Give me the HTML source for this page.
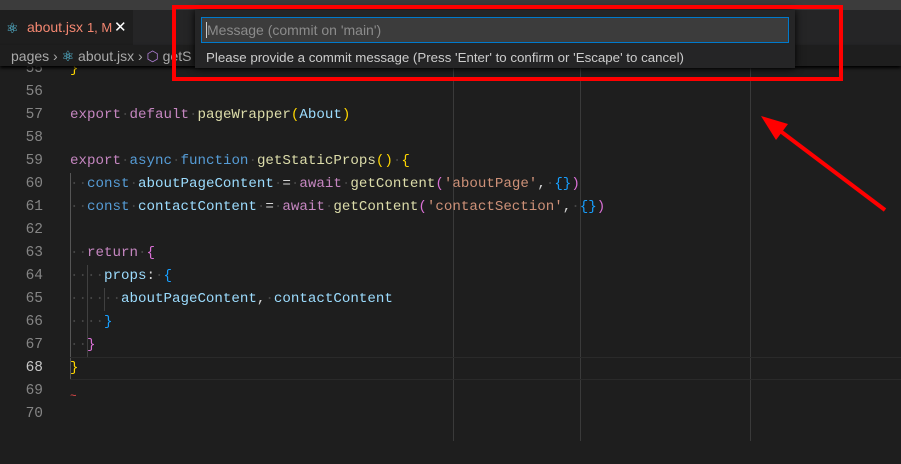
<!DOCTYPE html>
<html><head><style>
body{margin:0;width:901px;height:441px;overflow:hidden;background:#1e1e1e;position:relative;font-family:"Liberation Sans",sans-serif}
.abs{position:absolute}
.code{font-family:"Liberation Mono",monospace;font-size:14.17px;white-space:pre;}
.ln{position:absolute;left:0;width:43px;text-align:right;color:#858585;font-family:"Liberation Mono",monospace;font-size:14.5px;}
.row{position:absolute;left:70px;height:23px;line-height:23px}
.k{color:#c586c0}.b{color:#569cd6}.v{color:#9cdcfe}.f{color:#dcdcaa}.s{color:#ce9178}.y{color:#ffd700}.p{color:#da70d6}.l{color:#179fff}.d{color:#444}.w{color:#d4d4d4}
.top{z-index:5}
</style></head><body>
<!-- rulers -->
<div class="abs" style="left:453px;top:67px;width:1px;height:374px;background:#3a3a3a"></div>
<div class="abs" style="left:580px;top:67px;width:1px;height:374px;background:#3a3a3a"></div>
<div class="abs" style="left:750px;top:67px;width:1px;height:374px;background:#3a3a3a"></div>
<!-- indent guides -->
<div class="abs" style="left:70px;top:173px;width:1px;height:207px;background:#555"></div>
<div class="abs" style="left:87px;top:265px;width:1px;height:92px;background:#404040"></div>
<div class="abs" style="left:104px;top:288px;width:1px;height:23px;background:#404040"></div>
<!-- current line -->
<div class="abs" style="left:70px;top:357px;width:831px;height:23px;border-top:1px solid #2a2a2a;border-bottom:1px solid #2a2a2a;box-sizing:border-box"></div>
<div class="code">
<div class="ln" style="top:58px;line-height:23px">55</div>
<div class="ln" style="top:81px;line-height:23px">56</div>
<div class="ln" style="top:104px;line-height:23px">57</div>
<div class="ln" style="top:127px;line-height:23px">58</div>
<div class="ln" style="top:150px;line-height:23px">59</div>
<div class="ln" style="top:173px;line-height:23px">60</div>
<div class="ln" style="top:196px;line-height:23px">61</div>
<div class="ln" style="top:219px;line-height:23px">62</div>
<div class="ln" style="top:242px;line-height:23px">63</div>
<div class="ln" style="top:265px;line-height:23px">64</div>
<div class="ln" style="top:288px;line-height:23px">65</div>
<div class="ln" style="top:311px;line-height:23px">66</div>
<div class="ln" style="top:334px;line-height:23px">67</div>
<div class="ln" style="top:357px;line-height:23px;color:#c6c6c6">68</div>
<div class="ln" style="top:380px;line-height:23px">69</div>
<div class="ln" style="top:403px;line-height:23px">70</div>
<div class="row" style="top:58px"><span class="y">}</span></div>
<div class="row" style="top:104px"><span class="k">export</span><span class="d">·</span><span class="k">default</span><span class="d">·</span><span class="f">pageWrapper</span><span class="y">(</span><span class="v">About</span><span class="y">)</span></div>
<div class="row" style="top:150px"><span class="k">export</span><span class="d">·</span><span class="b">async</span><span class="d">·</span><span class="b">function</span><span class="d">·</span><span class="f">getStaticProps</span><span class="y">()</span><span class="d">·</span><span class="y">{</span></div>
<div class="row" style="top:173px"><span class="d">··</span><span class="b">const</span><span class="d">·</span><span class="v">aboutPageContent</span><span class="d">·</span><span class="w">=</span><span class="d">·</span><span class="k">await</span><span class="d">·</span><span class="f">getContent</span><span class="p">(</span><span class="s">'aboutPage'</span><span class="w">,</span><span class="d">·</span><span class="l">{}</span><span class="p">)</span></div>
<div class="row" style="top:196px"><span class="d">··</span><span class="b">const</span><span class="d">·</span><span class="v">contactContent</span><span class="d">·</span><span class="w">=</span><span class="d">·</span><span class="k">await</span><span class="d">·</span><span class="f">getContent</span><span class="p">(</span><span class="s">'contactSection'</span><span class="w">,</span><span class="d">·</span><span class="l">{}</span><span class="p">)</span></div>
<div class="row" style="top:242px"><span class="d">··</span><span class="k">return</span><span class="d">·</span><span class="p">{</span></div>
<div class="row" style="top:265px"><span class="d">····</span><span class="v">props</span><span class="w">:</span><span class="d">·</span><span class="l">{</span></div>
<div class="row" style="top:288px"><span class="d">······</span><span class="v">aboutPageContent</span><span class="w">,</span><span class="d">·</span><span class="v">contactContent</span></div>
<div class="row" style="top:311px"><span class="d">····</span><span class="l">}</span></div>
<div class="row" style="top:334px"><span class="d">··</span><span class="p">}</span></div>
<div class="row" style="top:357px"><span class="y">}</span></div>
<div class="row" style="top:386px;color:#f14c4c;font-size:11px">~</div>
</div>
<div class="abs top" style="left:0;top:0;width:901px;height:10px;background:#3c3c3c"></div>
<div class="abs top" style="left:0;top:10px;width:901px;height:35px;background:#252526"></div>
<div class="abs top" style="left:0;top:10px;width:133px;height:35px;background:#1e1e1e"></div>
<div class="abs top" style="left:6px;top:20px;color:#61dafb;font-size:14px">⚛</div>
<div class="abs top" style="left:27px;top:19px;color:#f48771;font-size:14px">about.jsx <span style="font-size:13px">1, M</span></div>
<div class="abs top" style="left:114px;top:18px;color:#fff;font-size:15px">✕</div>
<div class="abs top" style="left:0;top:45px;width:901px;height:21px;background:#1e1e1e;box-shadow:0 2px 3px #000"></div>
<div class="abs top" style="left:11px;top:48px;color:#a9a9a9;font-size:14px">pages › <span style="color:#61dafb">⚛</span> about.jsx › <span style="color:#b180d7">⬡</span> getS</div>
<!-- dialog -->
<div class="abs top" style="left:195px;top:10px;width:600px;height:58px;background:#252526;box-shadow:0 0 8px #000"></div>
<div class="abs top" style="left:201px;top:17px;width:588px;height:26px;background:#3c3c3c;border:1px solid #007acc;box-sizing:border-box"></div>
<div class="abs top" style="left:206px;top:22px;width:1px;height:16px;background:#ccc"></div>
<div class="abs top" style="left:207px;top:22px;color:#8b8b8b;font-size:14px">Message (commit on 'main')</div>
<div class="abs top" style="left:206px;top:50px;color:#cccccc;font-size:13.3px">Please provide a commit message (Press 'Enter' to confirm or 'Escape' to cancel)</div>
<div class="abs top" style="left:172px;top:5px;width:671px;height:76px;border:4px solid #ff0000;box-sizing:border-box"></div>
<svg class="abs top" style="left:0;top:0" width="901" height="441"><line x1="885" y1="210" x2="775" y2="127" stroke="#f00" stroke-width="4"/><polygon points="761,116 788,124 776,140" fill="#f00"/></svg>
</body></html>
